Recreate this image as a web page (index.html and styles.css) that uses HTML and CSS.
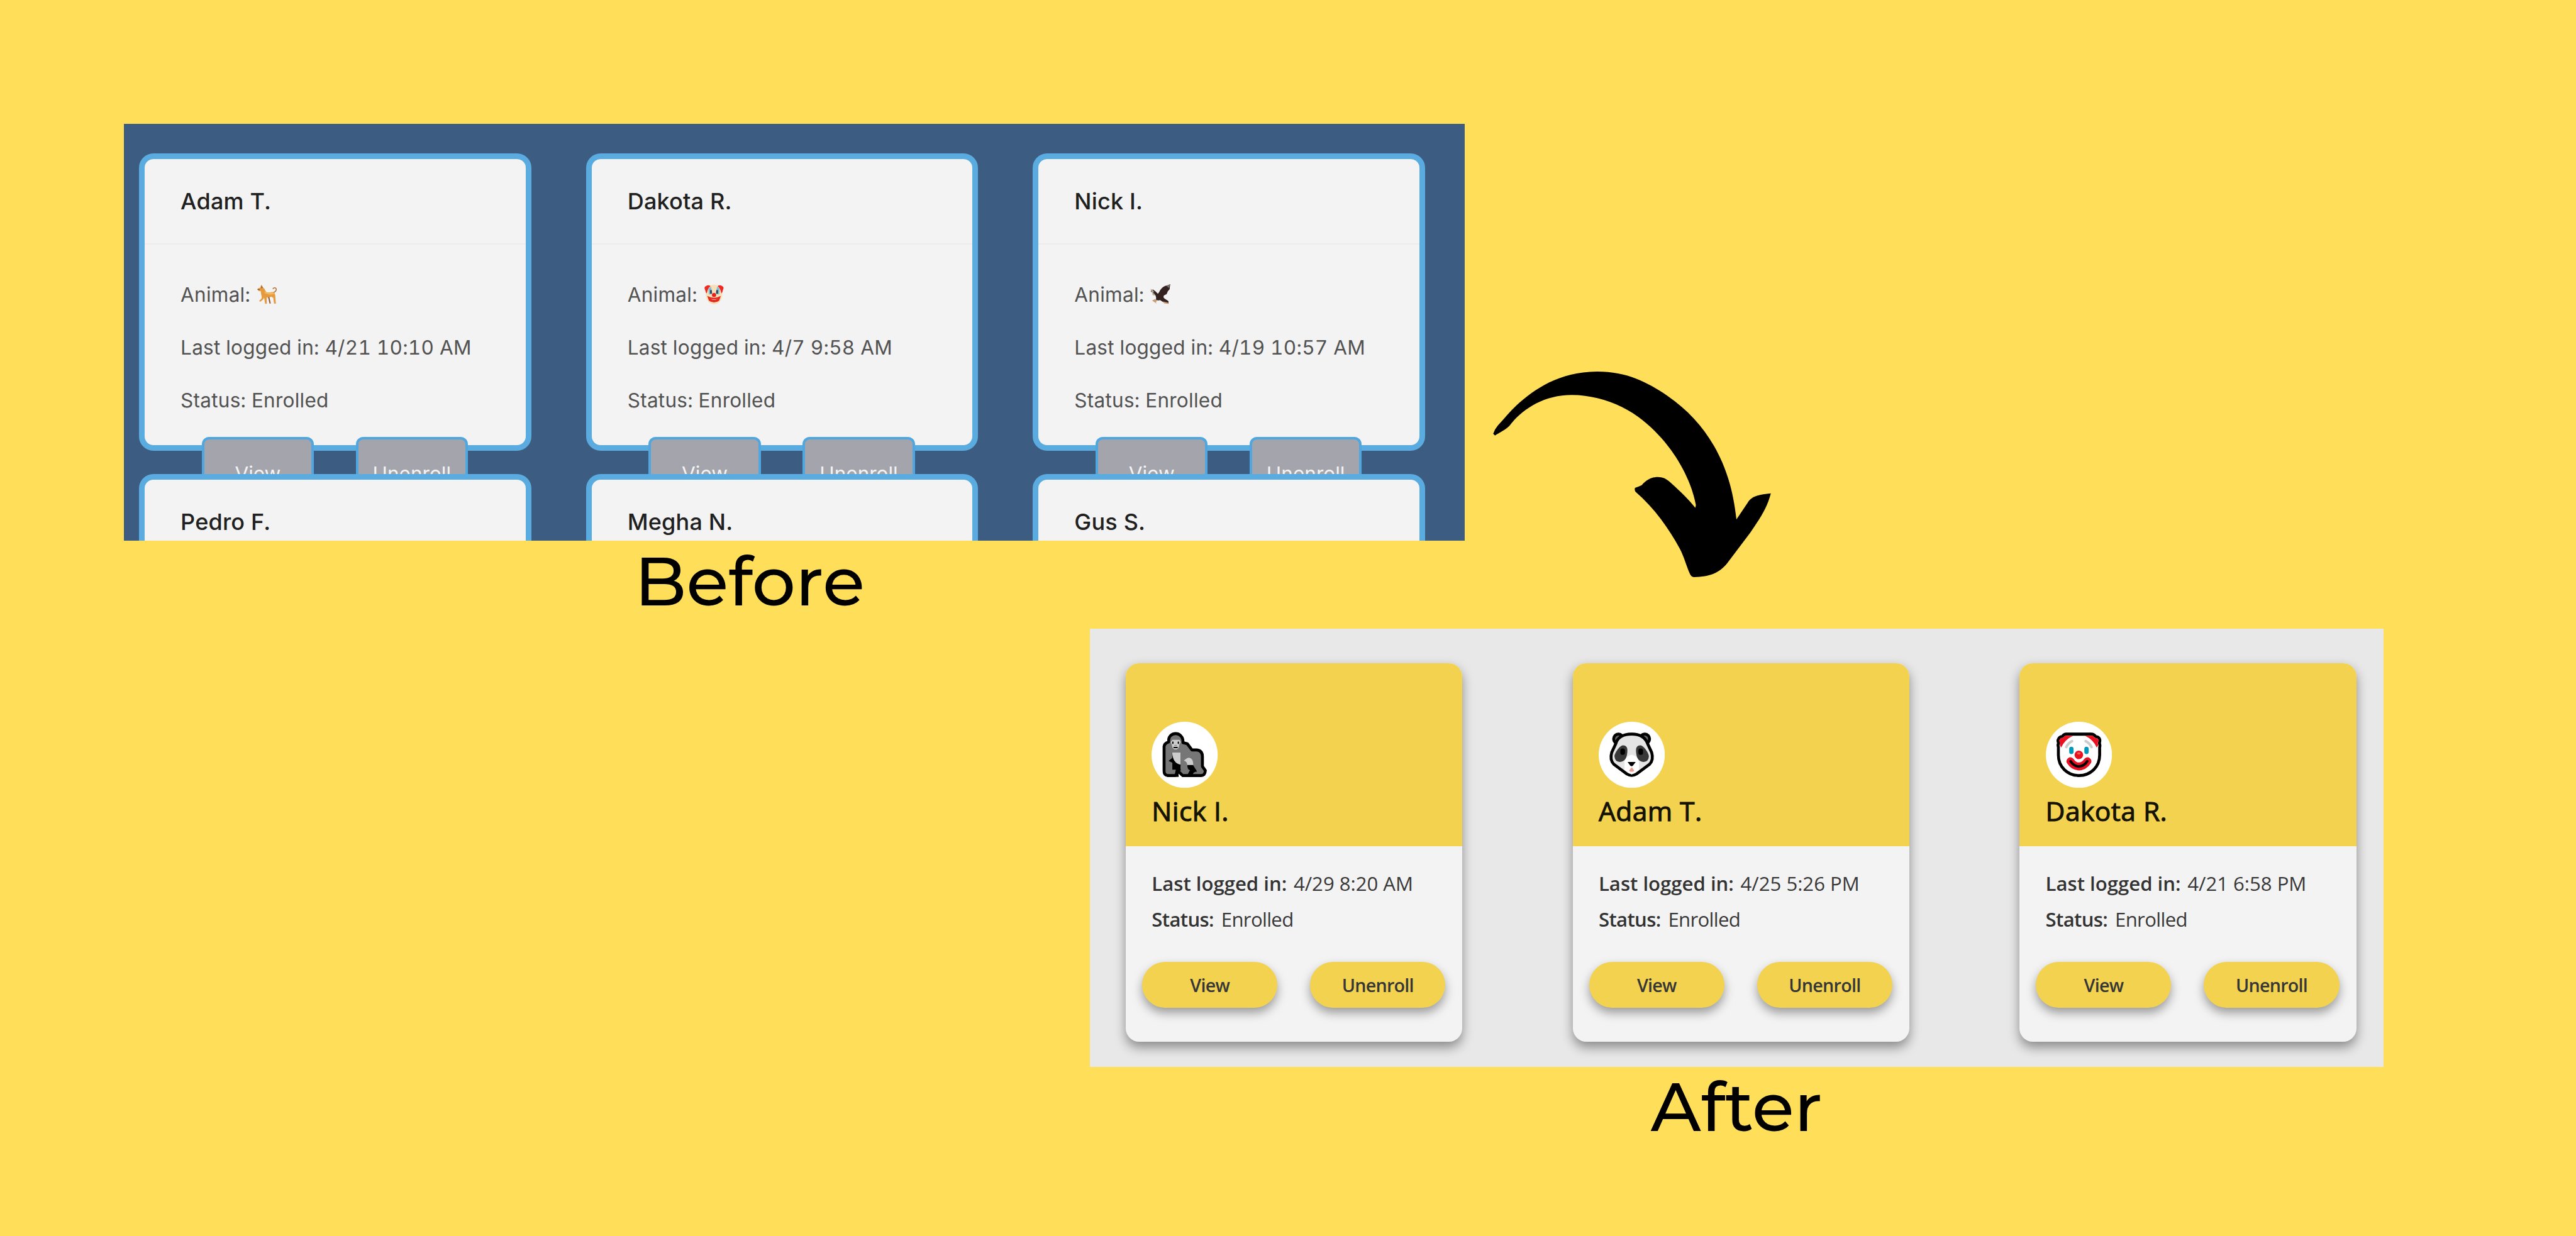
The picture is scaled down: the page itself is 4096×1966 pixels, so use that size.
FILE: index.html
```html
<!DOCTYPE html>
<html lang="en">
<head>
<meta charset="utf-8">
<title>Before and After</title>
<link rel="stylesheet" href="styles.css">
</head>
<body>
<main class="page">
  <section class="top">
    <figure class="figure">
      <div class="old-panel">
        <article class="old-card">
          <h2 class="old-name">Adam T.</h2>
          <div class="old-info">
            <p>Animal: <svg class="mini" viewBox="50 32 126 122"><path d="M150 60q2-9 11-8q11 2 9 13q-3 12-17 16" fill="none" stroke="#ba722f" stroke-width="6"/><path d="M54 60l18-9l7-17l10 16l9 8q4 14 12 21q15 5 36-2q16 3 18 22l4 50h-11l-5-35l-13-8q-12 8-28 5l2 38h-11l-6-37q-4 14-25 26l-5-8q14-6 16-20q-5-20-7-38l-14-1z" fill="#e59a3f"/><path d="M128 108l9 40h-8l-9-38zM80 36l8 16-10 4zM54 62l10 5 8-3-10-7z" fill="#965a35"/><path d="M98 72q12 14 50 8l12 10q-30 10-60-4z" fill="#f5b759"/></svg></p>
            <p>Last logged in: 4/21 10:10 AM</p>
            <p>Status: Enrolled</p>
          </div>
          <div class="old-actions"><button class="old-button">View</button><button class="old-button">Unenroll</button></div>
        </article>
        <article class="old-card">
          <h2 class="old-name">Dakota R.</h2>
          <div class="old-info">
            <p>Animal: <svg class="mini" viewBox="0 0 40 40"><path d="M4 13Q-1 6 4 4Q10 0 15 5L9 18Q5 22 4 13M36 13Q41 6 36 4Q30 0 25 5L31 18Q35 22 36 13" fill="#ee2922"/><path d="M20 1Q35 2 36 20Q34 38 20 39Q6 38 4 20Q5 2 20 1" fill="#f6dfb9"/><path d="M4 5Q8 1 13 4Q7 9 6 18Q1 14 4 5M36 5Q32 1 27 4Q33 9 34 18Q39 14 36 5" fill="#ee2922"/><path d="M9 9l5-4 3 14-7 1zM31 9l-5-4-3 14 7 1z" fill="#7ebfd9"/><ellipse cx="14" cy="15" rx="1.800" ry="4" fill="#33434e"/><ellipse cx="26" cy="15" rx="1.800" ry="4" fill="#33434e"/><path d="M7 23q13 7 26 0l-3 9q-10 7-20 0z" fill="#e6281e"/><path d="M13 28q7 3 14 0-7 5-14 0" fill="#fff"/><circle cx="20" cy="21" r="4" fill="#e81e19"/></svg></p>
            <p>Last logged in: 4/7 9:58 AM</p>
            <p>Status: Enrolled</p>
          </div>
          <div class="old-actions"><button class="old-button">View</button><button class="old-button">Unenroll</button></div>
        </article>
        <article class="old-card">
          <h2 class="old-name">Nick I.</h2>
          <div class="old-info">
            <p>Animal: <svg class="mini" viewBox="466 613 68 73" preserveAspectRatio="none"><path d="M495 642q6-16 20-23q11-1 17-6q-2 10-2 18l-6 7-4 10-9 5q-3 6 1 10l14 10 0 9-14-3-14-10q-8 3-13-1 1-10-2-16l-9-5l3-3-9-4v-5l7-3 9 7 7 8z" fill="#33221f"/><path d="M467 629l8 6 4 7-9-1zM472 645l7 1 4 7-9-1z" fill="#b8aaa2"/><path d="M472 671l10-5 7 6-5 4 3 6-8-6zM507 674l17 4 3 5-15-2z" fill="#c79b73"/><path d="M519 618l13-5-5 14z" fill="#77716f"/></svg></p>
            <p>Last logged in: 4/19 10:57 AM</p>
            <p>Status: Enrolled</p>
          </div>
          <div class="old-actions"><button class="old-button">View</button><button class="old-button">Unenroll</button></div>
        </article>
        <article class="old-card"><h2 class="old-name">Pedro F.</h2></article>
        <article class="old-card"><h2 class="old-name">Megha N.</h2></article>
        <article class="old-card"><h2 class="old-name">Gus S.</h2></article>
      </div>
      <figcaption class="caption">Before</figcaption>
    </figure>
    <svg class="arrow" viewBox="90 120 1375 1205" preserveAspectRatio="none"><path d="M97 486Q104 460 120 438C150 400 180 355 213 319C300 226 420 126 605 124C750 123 850 183 955 267C1050 346 1125 440 1180 555C1245 690 1275 820 1291 985L1346 888C1365 850 1400 840 1460 833C1440 925 1400 990 1359 1062L1246 1240C1210 1295 1160 1321 1082 1321Q1070 1321 1063 1303C1045 1255 1035 1205 1013 1155C960 1040 890 920 795 823Q790 812 793 801Q813 794 826 786C840 765 865 738 906 738C940 739 957 759 974 777C1010 816 1055 865 1089 917L1092 902C1070 760 990 560 830 407C740 320 610 260 482 260C350 260 250 337 190 420C165 459 160 456 106 496Z"/></svg>
  </section>
  <figure class="figure after">
    <div class="new-panel">
      <article class="new-card">
        <header class="new-head">
          <svg class="avatar" viewBox="47 36 385 385"><circle cx="239.500" cy="228.500" r="192.500" fill="#fff"/><path d="M147 153C140 90 234 87 230 158L255 164L282 200H310Q344 203 343 242V296L360 320Q358 351 333 349H228L203 325L185 349H140Q119 345 120 322V180Q122 162 147 153Z" fill="#767676" stroke="#000" stroke-width="17" stroke-linejoin="round"/><path d="M146 264L167 247V214H216V290Q213 307 218 320Q200 316 205 357H188Q180 350 188 315H168V275ZM255 287H288L312 326Q288 329 288 342H257L271 318Q255 314 255 287Z"/><path d="M167 214H216V286Q170 277 167 214ZM235 263Q253 244 269 246Q290 251 290 287H255Q253 266 235 263ZM168 141H211L217 155L208 170Q207 197 187 198Q167 197 165 170L158 154Z" fill="#ccc"/><ellipse cx="171" cy="158" rx="4" ry="8"/><ellipse cx="203" cy="158" rx="4" ry="8"/><path d="M178 186h18" stroke="#000" stroke-width="8" stroke-linecap="round"/><path d="M180 173h14" stroke="#777" stroke-width="4"/></svg>
          <h2 class="new-name">Nick I.</h2>
        </header>
        <div class="new-info">
          <p><b>Last logged in:</b><span>4/29 8:20 AM</span></p>
          <p class="status"><b>Status:</b><span>Enrolled</span></p>
        </div>
        <div class="new-actions"><button class="new-button">View</button><button class="new-button">Unenroll</button></div>
      </article>
      <article class="new-card">
        <header class="new-head">
          <svg class="avatar" viewBox="40 36 385 385"><circle cx="232.500" cy="228.500" r="192.500" fill="#fff"/><circle cx="155" cy="136" r="28" fill="#666" stroke="#000" stroke-width="17"/><circle cx="308" cy="136" r="28" fill="#666" stroke="#000" stroke-width="17"/><path d="M232 108C175 108 149 133 141 160L116 214C107 245 111 266 128 283L204 340Q232 357 260 340L336 283C353 266 357 245 348 214L323 160C311 130 286 108 232 108Z" fill="#e4e4e4" stroke="#000" stroke-width="17" stroke-linejoin="round"/><path d="M190 270Q194 235 232 228Q270 235 274 270V317Q253 331 232 343Q211 331 190 317Z" fill="#fff"/><path d="M132 238C131 221 160 176 181 173Q207 174 207 201Q207 269 163 270Q134 268 132 238ZM332 238C333 221 304 176 283 173Q257 174 257 201Q257 269 301 270Q330 268 332 238Z" fill="#383838"/><rect x="166" y="191" width="27" height="38" rx="13"/><rect x="271" y="191" width="27" height="38" rx="13"/><path d="M208 270H255L240 290Q232 299 223 290Z"/><path d="M230 303L235 303L246 319Q244 327 232 327Q219 327 217 320Z" fill="#ee9c91"/></svg>
          <h2 class="new-name">Adam T.</h2>
        </header>
        <div class="new-info">
          <p><b>Last logged in:</b><span>4/25 5:26 PM</span></p>
          <p class="status"><b>Status:</b><span>Enrolled</span></p>
        </div>
        <div class="new-actions"><button class="new-button">View</button><button class="new-button">Unenroll</button></div>
      </article>
      <article class="new-card">
        <header class="new-head">
          <svg class="avatar" viewBox="31 36 385 385"><circle cx="223.500" cy="228.500" r="192.500" fill="#fff"/><path d="M104 183Q99 170 106 160Q97 147 106 134Q113 121 127 122Q136 107 153 108H294Q311 108 320 122Q338 123 344 137Q347 151 342 160Q348 172 344 185V230C344 300 290 349 224 349C158 349 104 300 104 230Z" fill="#fff" stroke="#000" stroke-width="17" stroke-linejoin="round"/><path d="M120 186L112 171L115 161L107 145L121 130L131 130L142 117H190Q142 138 120 186ZM327 186L336 171L332 159L340 145L326 130L316 131L305 117H258Q307 139 327 186Z" fill="#ed1021"/><path d="M185 117Q223 103 262 117Z"/><path d="M150 183Q161 160 183 149M297 183Q285 160 263 149" fill="none" stroke="#ccc" stroke-width="15" stroke-linecap="round"/><rect x="167" y="181" width="25" height="43" rx="12.500" fill="#0099bc"/><rect x="255" y="181" width="25" height="43" rx="12.500" fill="#0099bc"/><path d="M174 266Q194 296 223 296Q253 296 273 266" fill="none" stroke="#e81123" stroke-width="46" stroke-linecap="round"/><path d="M175 266Q195 296 223 296Q252 296 272 266" fill="none" stroke="#000" stroke-width="15" stroke-linecap="round"/><circle cx="223" cy="229" r="31" fill="#fff"/><circle cx="223" cy="229" r="25" fill="#e9101f"/><ellipse cx="223" cy="220" rx="10" ry="7" fill="#ee6356"/></svg>
          <h2 class="new-name">Dakota R.</h2>
        </header>
        <div class="new-info">
          <p><b>Last logged in:</b><span>4/21 6:58 PM</span></p>
          <p class="status"><b>Status:</b><span>Enrolled</span></p>
        </div>
        <div class="new-actions"><button class="new-button">View</button><button class="new-button">Unenroll</button></div>
      </article>
    </div>
    <figcaption class="caption">After</figcaption>
  </figure>
</main>
</body>
</html>
```
FILE: styles.css
```css
* { box-sizing: border-box; margin: 0; padding: 0; }
html { font-size: 8.192px; }
body { background: #ffde59; overflow: hidden; }
svg { display: block; flex: none; }
button { font: inherit; color: inherit; }

.page { width: 500rem; height: 240rem; padding-top: 24rem; }
.top { display: flex; align-items: flex-start; height: 98.1rem; padding-left: 24rem; }
.figure { display: flex; flex-direction: column; }
.caption {
  font: 500 13.3rem/15rem Montserrat, Inter, sans-serif;
  text-align: center;
  white-space: nowrap;
  color: #000;
}
.top .caption { padding-right: 17.3rem; margin-top: .3rem; }
.after .caption { margin-top: .3rem; }
.arrow { width: 54.37rem; height: 40.17rem; margin: 48rem 0 0 5.26rem; }

/* Original dashboard */
.old-panel {
  display: grid;
  grid-template-columns: repeat(3, 76.1rem);
  grid-auto-rows: 57.8rem;
  gap: 4.5rem 10.65rem;
  width: 260.3rem;
  height: 81rem;
  padding: 5.75rem 0 0 3rem;
  overflow: hidden;
  background: #3d5c81;
  font-family: Inter, sans-serif;
}
.old-card {
  position: relative;
  background: #f3f3f3;
  border: 1.1rem solid #5aabdf;
  border-radius: 2.8rem;
}
.old-name {
  height: 16.6rem;
  padding-left: 6.95rem;
  border-bottom: .25rem solid #ececec;
  font-size: 4.4rem;
  font-weight: 500;
  line-height: 16.4rem;
  letter-spacing: .02rem;
  color: #202020;
  white-space: nowrap;
}
.old-info { padding: 4.65rem 0 0 6.95rem; }
.old-info p {
  display: flex;
  align-items: center;
  gap: 1.2rem;
  height: 10.25rem;
  font-size: 3.85rem;
  font-variant-numeric: tabular-nums;
  line-height: 10.25rem;
  letter-spacing: .03rem;
  color: #525252;
  white-space: nowrap;
}
.mini { width: 4rem; height: 4rem; }
.old-actions { display: flex; gap: 8.15rem; padding: 2rem 0 0 11.07rem; }
.old-button {
  width: 21.75rem;
  height: 14.4rem;
  border: .55rem solid #50a7df;
  border-radius: 1.4rem;
  background: #a4a4ac;
  color: #f3f3f3;
  font-size: 3.85rem;
}

/* Redesigned dashboard */
.after { width: 251.1rem; margin-left: 211.5rem; }
.new-panel {
  display: flex;
  gap: 21.4rem;
  height: 85rem;
  padding: 6.63rem 0 0 7rem;
  background: #e8e8e8;
  font-family: "Open Sans", "Noto Sans", sans-serif;
}
.new-card {
  width: 65.35rem;
  height: 73.5rem;
  overflow: hidden;
  border-radius: 2.6rem;
  background: #f3f3f3;
  box-shadow: 0 1rem 2.2rem rgba(0, 0, 0, .4);
}
.new-head { height: 35.57rem; padding: 11.42rem 0 0 5.05rem; background: #f2d24f; }
.avatar { width: 12.85rem; height: 12.85rem; }
.new-name {
  font-size: 5.2rem;
  font-weight: 400;
  line-height: 8.8rem;
  letter-spacing: .05rem;
  -webkit-text-stroke: .13rem #141203;
  color: #141203;
  white-space: nowrap;
}
.new-info { padding: 3.74rem 0 0 5.05rem; }
.new-info p { display: flex; gap: 1.3rem; font-size: 3.8rem; line-height: 7.06rem; color: #383838; white-space: nowrap; }
.new-info b { font-weight: 600; color: #333; }
.new-info .status { gap: 1.45rem; letter-spacing: -.08rem; }
.new-actions { display: flex; gap: 6.35rem; padding: 4.64rem 0 0 3.2rem; }
.new-button {
  width: 26.25rem;
  height: 8.85rem;
  border: 0;
  border-radius: 4.43rem;
  background: #f2d24f;
  box-shadow: 0 1rem 2rem rgba(0, 0, 0, .36);
  font-size: 3.5rem;
  font-weight: 600;
  letter-spacing: -.09rem;
  color: #363636;
}
```
